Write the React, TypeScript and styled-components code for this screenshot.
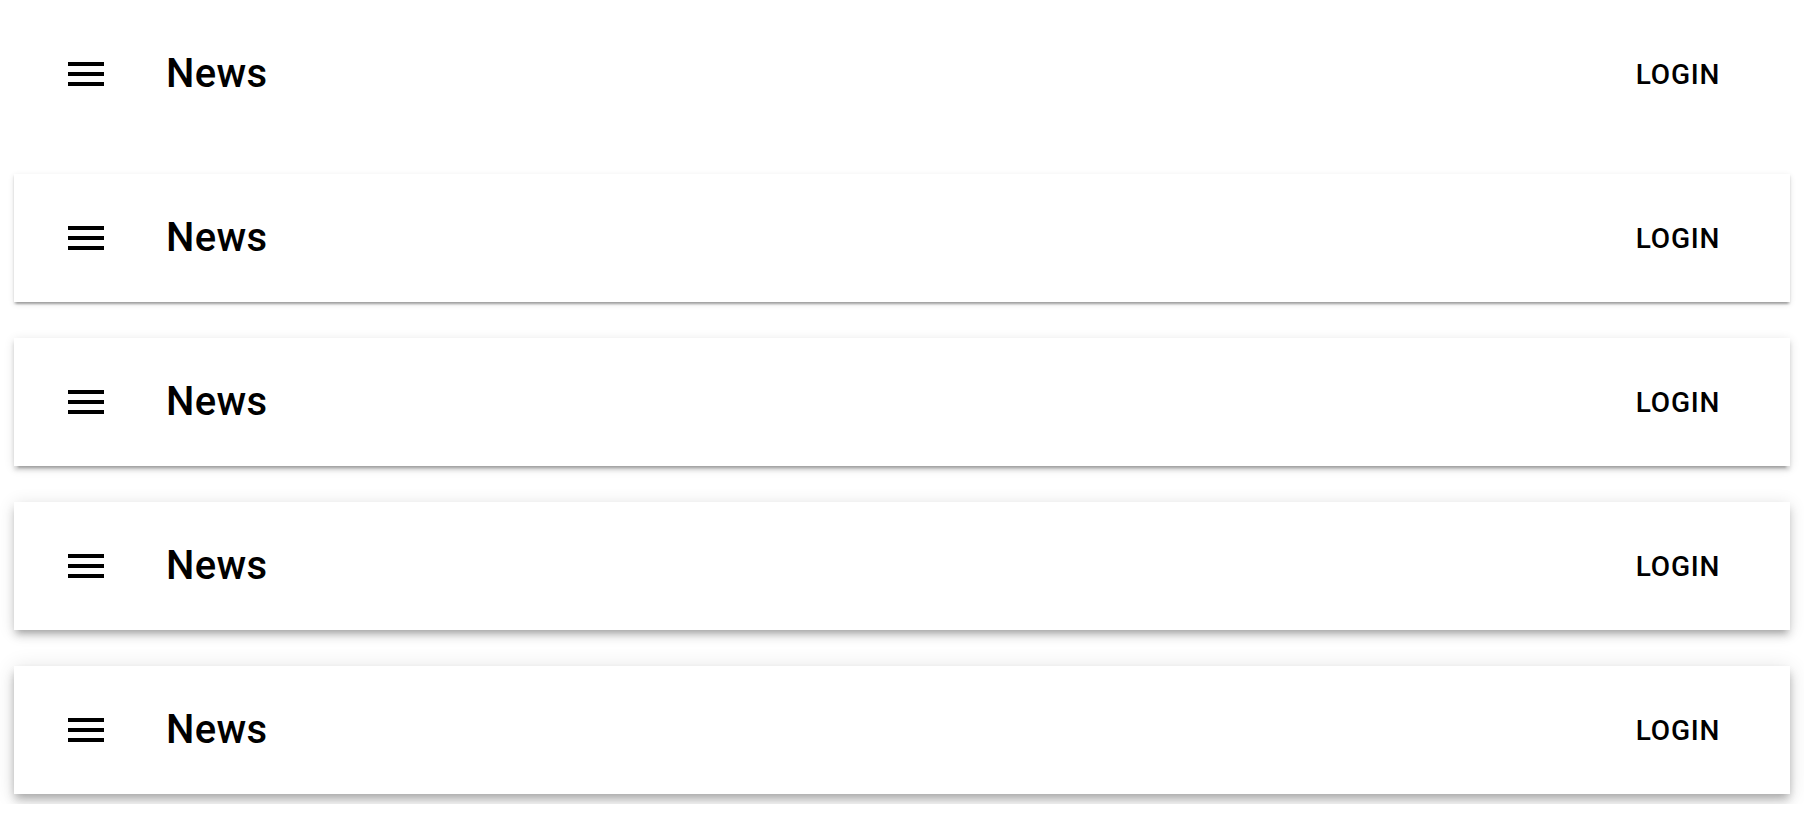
import React from "react";
import styled, { createGlobalStyle } from "styled-components";

const GlobalStyle = createGlobalStyle`
  body {
    margin: 0;
    background: #fff;
    font-family: Roboto, "Liberation Sans", sans-serif;
    color: #000;
  }
`;

const shadows = [
  "none",
  "0px 4px 2px -2px rgba(0,0,0,0.2), 0px 2px 2px 0px rgba(0,0,0,0.14), 0px 2px 6px 0px rgba(0,0,0,0.12)",
  "0px 6px 2px -4px rgba(0,0,0,0.2), 0px 4px 4px 0px rgba(0,0,0,0.14), 0px 2px 10px 0px rgba(0,0,0,0.12)",
  "0px 6px 6px -4px rgba(0,0,0,0.2), 0px 6px 8px 0px rgba(0,0,0,0.14), 0px 2px 16px 0px rgba(0,0,0,0.12)",
  "0px 4px 8px -2px rgba(0,0,0,0.2), 0px 8px 10px 0px rgba(0,0,0,0.14), 0px 2px 20px 0px rgba(0,0,0,0.12)",
];

const Page = styled.div`
  display: flex;
  flex-direction: column;
  gap: 36px;
  padding: 10px 14px;
`;

const Bar = styled.header<{ $elevation: number }>`
  display: flex;
  align-items: center;
  height: 128px;
  padding: 0 48px;
  background: #fff;
  box-shadow: ${(p) => shadows[p.$elevation]};
`;

const MenuButton = styled.button`
  display: flex;
  align-items: center;
  justify-content: center;
  padding: 24px;
  margin-left: -24px;
  margin-right: 32px;
  border: none;
  border-radius: 50%;
  background: transparent;
  color: inherit;
  cursor: pointer;

  svg {
    width: 48px;
    height: 48px;
    fill: currentColor;
  }
`;

const Title = styled.h6`
  flex-grow: 1;
  margin: 0;
  font-size: 40px;
  font-weight: 500;
  line-height: 1.6;
  letter-spacing: 0.0075em;
`;

const LoginButton = styled.button`
  min-width: 128px;
  padding: 12px 16px;
  border: none;
  background: transparent;
  color: inherit;
  font-family: inherit;
  font-size: 28px;
  font-weight: 500;
  line-height: 1.75;
  letter-spacing: 0.02857em;
  text-transform: uppercase;
  text-align: center;
  cursor: pointer;
`;

const MenuIcon = () => (
  <svg viewBox="0 0 24 24" aria-hidden="true">
    <path d="M3 18h18v-2H3v2zm0-5h18v-2H3v2zm0-7v2h18V6H3z" />
  </svg>
);

export default function App() {
  return (
    <>
      <GlobalStyle />
      <Page>
        {[0, 1, 2, 3, 4].map((level) => (
          <Bar key={level} $elevation={level}>
            <MenuButton aria-label="menu">
              <MenuIcon />
            </MenuButton>
            <Title>News</Title>
            <LoginButton>Login</LoginButton>
          </Bar>
        ))}
      </Page>
    </>
  );
}
